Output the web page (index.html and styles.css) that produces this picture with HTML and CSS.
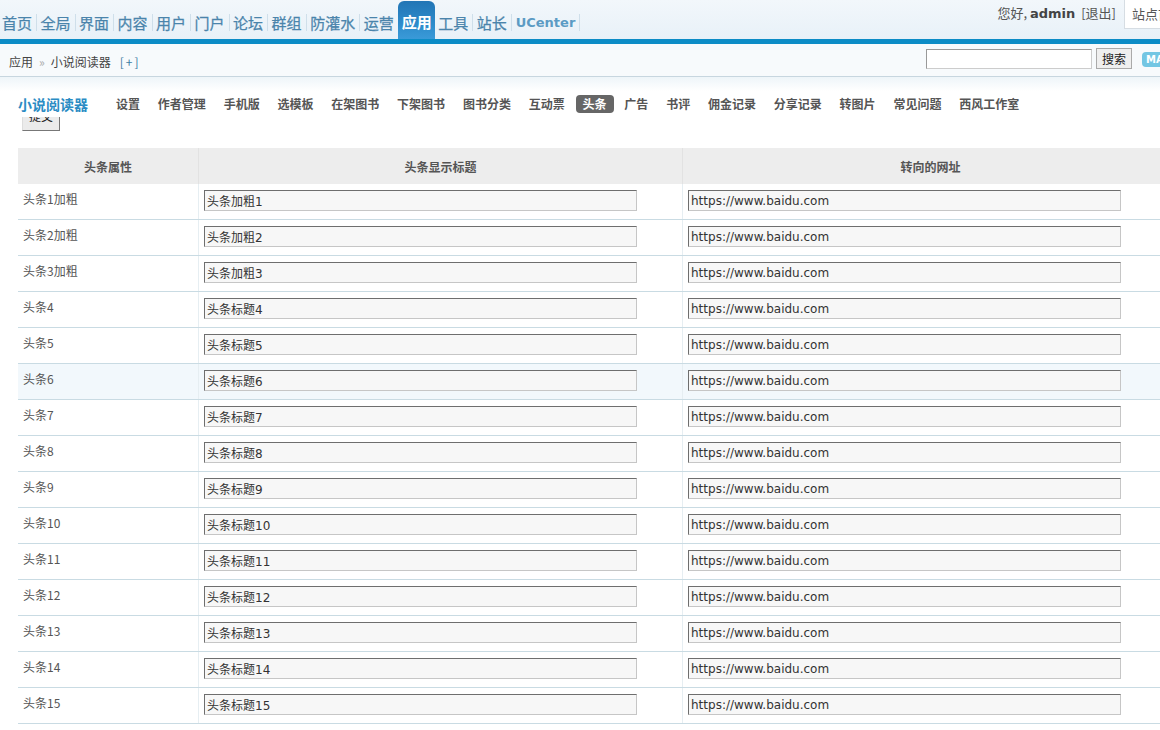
FILE: index.html
```html
<!DOCTYPE html>
<html>
<head>
<meta charset="utf-8">
<link rel="stylesheet" href="styles.css">
</head>
<body>
<div class="header">
  <ul class="nav">
    <li>首页</li><li>全局</li><li>界面</li><li>内容</li><li>用户</li><li>门户</li><li>论坛</li><li>群组</li><li>防灌水</li><li>运营</li><li class="on">应用</li><li>工具</li><li>站长</li><li class="uc">UCenter</li>
  </ul>
  <div class="user">
    <span class="hello">您好, <b>admin</b> <span class="logout">[退出]</span></span>
    <span class="sitebox">站点首页</span>
  </div>
</div>
<div class="bluebar"></div>
<div class="crumbs">
  <div class="crumb-left">应用<span class="raquo">»</span>小说阅读器<span class="plus">[+]</span></div>
  <div class="search">
    <input class="sinput" type="text">
    <button class="sbtn">搜索</button>
    <span class="badge">MA</span>
  </div>
</div>
<div class="fade"></div>
<div class="submenu">
  <span class="subtitle">小说阅读器</span>
  <span class="subitem">设置</span>
  <span class="subitem">作者管理</span>
  <span class="subitem">手机版</span>
  <span class="subitem">选模板</span>
  <span class="subitem">在架图书</span>
  <span class="subitem">下架图书</span>
  <span class="subitem">图书分类</span>
  <span class="subitem">互动票</span>
  <span class="subitem active">头条</span>
  <span class="subitem">广告</span>
  <span class="subitem">书评</span>
  <span class="subitem">佣金记录</span>
  <span class="subitem">分享记录</span>
  <span class="subitem">转图片</span>
  <span class="subitem">常见问题</span>
  <span class="subitem">西风工作室</span>
</div>
<div class="submitwrap"><button class="submit">提交</button></div>
<table class="grid">
  <thead>
    <tr><th class="c1">头条属性</th><th class="c2">头条显示标题</th><th class="c3">转向的网址</th></tr>
  </thead>
  <tbody>
    <tr><td>头条1加粗</td><td><input class="fld" value="头条加粗1"></td><td><input class="fld" value="https://www.baidu.com"></td></tr>
    <tr><td>头条2加粗</td><td><input class="fld" value="头条加粗2"></td><td><input class="fld" value="https://www.baidu.com"></td></tr>
    <tr><td>头条3加粗</td><td><input class="fld" value="头条加粗3"></td><td><input class="fld" value="https://www.baidu.com"></td></tr>
    <tr><td>头条4</td><td><input class="fld" value="头条标题4"></td><td><input class="fld" value="https://www.baidu.com"></td></tr>
    <tr><td>头条5</td><td><input class="fld" value="头条标题5"></td><td><input class="fld" value="https://www.baidu.com"></td></tr>
    <tr class="hover"><td>头条6</td><td><input class="fld" value="头条标题6"></td><td><input class="fld" value="https://www.baidu.com"></td></tr>
    <tr><td>头条7</td><td><input class="fld" value="头条标题7"></td><td><input class="fld" value="https://www.baidu.com"></td></tr>
    <tr><td>头条8</td><td><input class="fld" value="头条标题8"></td><td><input class="fld" value="https://www.baidu.com"></td></tr>
    <tr><td>头条9</td><td><input class="fld" value="头条标题9"></td><td><input class="fld" value="https://www.baidu.com"></td></tr>
    <tr><td>头条10</td><td><input class="fld" value="头条标题10"></td><td><input class="fld" value="https://www.baidu.com"></td></tr>
    <tr><td>头条11</td><td><input class="fld" value="头条标题11"></td><td><input class="fld" value="https://www.baidu.com"></td></tr>
    <tr><td>头条12</td><td><input class="fld" value="头条标题12"></td><td><input class="fld" value="https://www.baidu.com"></td></tr>
    <tr><td>头条13</td><td><input class="fld" value="头条标题13"></td><td><input class="fld" value="https://www.baidu.com"></td></tr>
    <tr><td>头条14</td><td><input class="fld" value="头条标题14"></td><td><input class="fld" value="https://www.baidu.com"></td></tr>
    <tr><td>头条15</td><td><input class="fld" value="头条标题15"></td><td><input class="fld" value="https://www.baidu.com"></td></tr>
  </tbody>
</table>
</body>
</html>
```
FILE: styles.css
```css
html, body {
  margin: 0;
  padding: 0;
  overflow: hidden;
  background: #fff;
}
body {
  width: 1160px;
  font: 12px "DejaVu Sans", "Noto Sans CJK SC", sans-serif;
  color: #333;
}
.header {
  height: 39px;
  display: flex;
  justify-content: space-between;
  background: linear-gradient(#f2f7fb, #e8f1f8);
}
.nav {
  list-style: none;
  margin: 0;
  padding: 0;
  display: flex;
  align-items: flex-end;
}
.nav li {
  font-size: 15px;
  font-family: "Noto Sans CJK SC", sans-serif;
  color: #4a84ab;
  -webkit-text-stroke: 0.25px #4a84ab;
  padding: 0 4px 0 3.5px;
  line-height: 17px;
  margin-bottom: 8px;
  border-right: 1px solid #cfdfea;
}
.nav li:first-child { padding-left: 2px; }
.nav li.on {
  background: linear-gradient(#2275b5, #2d8bcb 60%, #3a9ad8);
  color: #fff;
  -webkit-text-stroke: 0;
  font-weight: bold;
  border-radius: 6px 6px 0 0;
  border-right: none;
  margin-left: -1px;
  margin-bottom: 0;
  padding: 12px 3px 9px 4px;
}
.nav li.uc {
  font-family: "DejaVu Sans", sans-serif;
  font-size: 13px;
  font-weight: bold;
  color: #5b9bc4;
  -webkit-text-stroke: 0;
  padding-left: 4px;
  padding-right: 4px;
}
.user {
  display: flex;
  align-items: flex-start;
  font-family: "Noto Sans CJK SC", sans-serif;
  font-size: 13px;
  color: #555;
}
.hello {
  margin-top: 3px;
  margin-right: 8px;
}
.hello b { color: #444; font-family: "DejaVu Sans", sans-serif; }
.logout { margin-left: 3px; }
.sitebox {
  background: #fff;
  border: 1px solid #d6dde3;
  border-right: none;
  border-top: none;
  padding: 4px 0 0 7px;
  height: 24px;
  width: 28px;
  overflow: hidden;
  white-space: nowrap;
}
.bluebar {
  height: 5px;
  background: #0c8cc6;
}
.crumbs {
  height: 32px;
  border-bottom: 1px solid #c7d6df;
  background: #f7fafc;
  display: flex;
  justify-content: space-between;
  align-items: flex-start;
}
.crumb-left {
  font-family: "Noto Sans CJK SC", sans-serif;
  font-size: 12px;
  color: #444;
  padding: 9px 0 0 9px;
}
.raquo { color: #aaa; margin: 0 6px 0 6px; }
.plus { color: #3c7da3; margin-left: 9px; letter-spacing: 2px; }
.search {
  display: flex;
  align-items: center;
  padding-top: 4px;
}
.sinput {
  width: 166px;
  height: 20px;
  box-sizing: border-box;
  border: 1px solid #999;
  border-right-color: #ccc;
  border-bottom-color: #ccc;
  margin: 0 4px 0 0;
  padding: 0;
  background: #fff;
}
.sbtn {
  width: 36px;
  height: 21px;
  box-sizing: border-box;
  border: 1px solid #aaa;
  background: #efefef;
  font: 12px "Noto Sans CJK SC", sans-serif;
  color: #222;
  padding: 0;
  margin: 0 10px 0 0;
}
.badge {
  display: inline-block;
  background: #73c6e3;
  color: #fff;
  font: bold 10px "DejaVu Sans", sans-serif;
  border-radius: 4px 0 0 4px;
  padding: 2px 0 2px 4px;
  width: 14px;
  height: 11px;
  line-height: 11px;
  overflow: hidden;
  white-space: nowrap;
  margin-top: 2px;
}
.fade {
  height: 14px;
  background: linear-gradient(#eef5f9, #fff);
}
.submenu {
  display: flex;
  align-items: center;
  padding-left: 18px;
  height: 26px;
  font-family: "Noto Sans CJK SC", sans-serif;
}
.subtitle {
  color: #2b8cc4;
  font-size: 14px;
  font-weight: bold;
  margin-right: 21px;
}
.subitem {
  font-size: 12px;
  font-weight: bold;
  color: #555;
  padding: 1px 7px;
  margin-right: 3.8px;
  line-height: 16px;
  border-radius: 4px;
}
.subitem.active {
  background: #666;
  color: #fff;
}
.submitwrap {
  height: 14px;
  overflow: hidden;
  padding-left: 22px;
}
.submit {
  display: block;
  margin-top: -9px;
  width: 38px;
  height: 23px;
  box-sizing: border-box;
  border: 1px solid #777;
  border-top-color: #ddd;
  border-left-color: #ddd;
  background: #ebebeb;
  font: 12px "Noto Sans CJK SC", sans-serif;
  line-height: 13px;
  color: #222;
  padding: 0 0 8px;
}
.grid {
  margin: 17px 0 0 18px;
  width: 1160px;
  border-collapse: collapse;
  table-layout: fixed;
}
.grid th {
  background: #ededed;
  height: 36px;
  padding: 0;
  font: bold 12px "Noto Sans CJK SC", sans-serif;
  color: #555;
  border-left: 1px solid #e2e2e2;
}
.grid th.c1 { width: 180px; border-left: none; }
.grid th.c2 { width: 483px; }
.grid td {
  height: 35px;
  padding: 0 0 0 5px;
  border-bottom: 1px solid #c9dbe3;
  border-left: 1px solid #e6eef2;
  vertical-align: top;
  font-family: "Noto Sans CJK SC", sans-serif;
  color: #555;
}
.grid td:first-child {
  border-left: none;
  padding-top: 6px;
  height: 29px;
}
.grid tr.hover td { background: #f2f8fc; }
.fld {
  margin-top: 6px;
  width: 433px;
  height: 21px;
  box-sizing: border-box;
  border: 1px solid #c6c6c6;
  border-top-color: #6e6e6e;
  border-left-color: #6e6e6e;
  background: #f7f7f7;
  padding: 0 2px;
  font: 12px "DejaVu Sans", "Noto Sans CJK SC", sans-serif;
  color: #333;
}
```
